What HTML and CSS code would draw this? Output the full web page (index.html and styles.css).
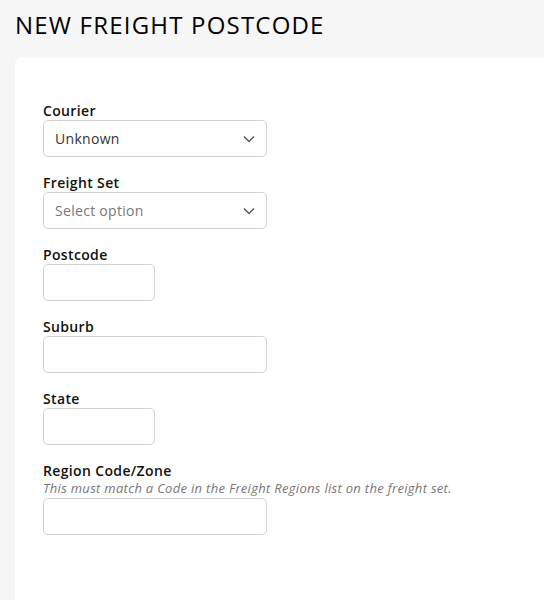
FILE: index.html
```html
<!DOCTYPE html>
<html>
<head>
<meta charset="utf-8">
<link rel="stylesheet" href="styles.css">
</head>
<body>
<h1 class="title">NEW FREIGHT POSTCODE</h1>
<div class="card">
  <form class="form">
    <div class="field">
      <label class="label">Courier</label>
      <div class="select wide">
        <span class="value">Unknown</span>
        <svg class="chev" width="12" height="8" viewBox="0 0 12 8"><path d="M1 1.5 L6 6.5 L11 1.5" fill="none" stroke="#555" stroke-width="1.4"/></svg>
      </div>
    </div>
    <div class="field">
      <label class="label">Freight Set</label>
      <div class="select wide">
        <span class="value placeholder">Select option</span>
        <svg class="chev" width="12" height="8" viewBox="0 0 12 8"><path d="M1 1.5 L6 6.5 L11 1.5" fill="none" stroke="#555" stroke-width="1.4"/></svg>
      </div>
    </div>
    <div class="field">
      <label class="label">Postcode</label>
      <input class="input narrow" type="text">
    </div>
    <div class="field">
      <label class="label">Suburb</label>
      <input class="input wide" type="text">
    </div>
    <div class="field">
      <label class="label">State</label>
      <input class="input narrow" type="text">
    </div>
    <div class="field">
      <label class="label">Region Code/Zone</label>
      <div class="hint">This must match a Code in the Freight Regions list on the freight set.</div>
      <input class="input wide" type="text">
    </div>
  </form>
</div>
</body>
</html>
```
FILE: styles.css
```css
html, body {
  margin: 0;
  padding: 0;
  background: #f6f6f6;
  font-family: "Open Sans", "Noto Sans", sans-serif;
  color: #111;
  overflow: hidden;
  height: 600px;
}
.title {
  margin: 0;
  padding: 9px 0 0 15px;
  height: 57px;
  box-sizing: border-box;
  font-size: 24px;
  font-weight: 400;
  line-height: 32px;
  letter-spacing: 1.2px;
  color: #000;
}
.card {
  margin-left: 15px;
  background: #fff;
  border-top-left-radius: 7px;
  padding: 45px 0 0 28px;
  height: 543px;
  box-sizing: border-box;
}
.form {
  display: flex;
  flex-direction: column;
  gap: 17px;
}
.field {
  display: flex;
  flex-direction: column;
}
.label {
  font-size: 14px;
  font-weight: 600;
  line-height: 18px;
  letter-spacing: 0.35px;
  color: #111;
}
.hint {
  font-size: 13px;
  font-style: italic;
  color: #777;
  line-height: 17px;
  letter-spacing: 0.3px;
  margin-bottom: 1px;
}
.select, .input {
  box-sizing: border-box;
  height: 37px;
  border: 1px solid #d2d2d2;
  border-radius: 5px;
  background: #fff;
  font-family: inherit;
  font-size: 14px;
}
.select {
  display: flex;
  align-items: center;
  justify-content: space-between;
  padding: 0 11px 0 11px;
}
.value { color: #333; letter-spacing: 0.3px; }
.placeholder { color: #777; }
.wide { width: 224px; }
.narrow { width: 112px; }
.input { padding: 0 11px; outline: none; }
```
